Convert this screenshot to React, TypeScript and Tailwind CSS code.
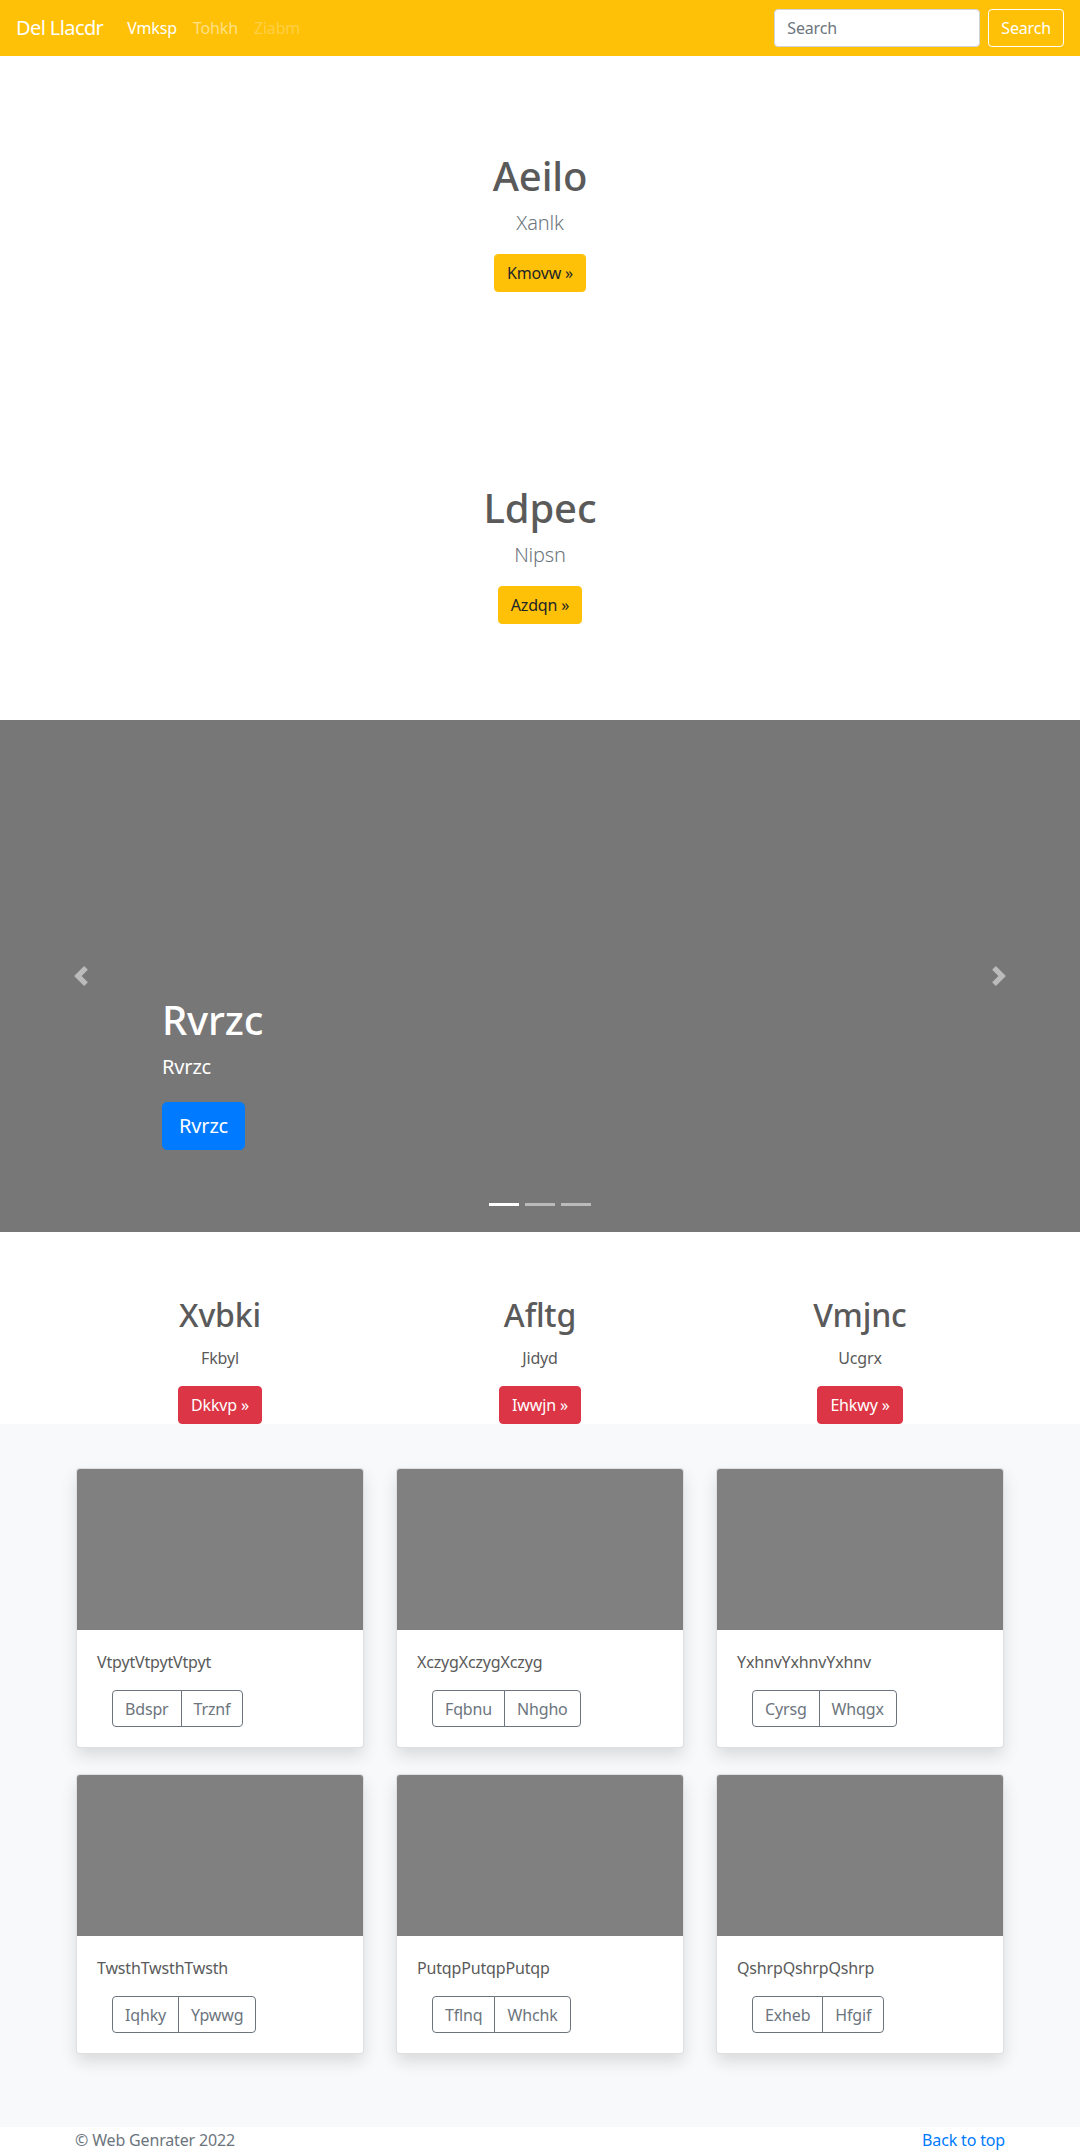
const features = [
  { title: "Xvbki", text: "Fkbyl", action: "Dkkvp »" },
  { title: "Afltg", text: "Jidyd", action: "Iwwjn »" },
  { title: "Vmjnc", text: "Ucgrx", action: "Ehkwy »" }
];

const cards = [
  { text: "VtpytVtpytVtpyt", buttons: ["Bdspr", "Trznf"] },
  { text: "XczygXczygXczyg", buttons: ["Fqbnu", "Nhgho"] },
  { text: "YxhnvYxhnvYxhnv", buttons: ["Cyrsg", "Whqgx"] },
  { text: "TwsthTwsthTwsth", buttons: ["Iqhky", "Ypwwg"] },
  { text: "PutqpPutqpPutqp", buttons: ["Tflnq", "Whchk"] },
  { text: "QshrpQshrpQshrp", buttons: ["Exheb", "Hfgif"] }
];

function Hero({ title, lead, action }: { title: string; lead: string; action: string }) {
  return (
    <section className="py-24 text-center">
      <h1 className="mb-2 text-[40px] leading-[48px] font-medium text-[#5a5a5a]">{title}</h1>
      <p className="mb-4 text-xl leading-[30px] font-light text-[#6c757d]">{lead}</p>
      <a className="inline-block h-[38px] rounded border border-[#ffc107] bg-[#ffc107] px-3 py-1.5 text-base leading-6 text-[#212529]">
        {action}
      </a>
    </section>
  );
}

function Carousel() {
  return (
    <div className="relative h-[512px] overflow-hidden bg-[#777777]">
      <div className="absolute inset-y-0 left-0 flex w-[15%] items-center justify-center opacity-50">
        <svg width="20" height="20" viewBox="0 0 8 8" fill="#fff">
          <path d="M5.25 0l-4 4 4 4 1.5-1.5L4.25 4l2.5-2.5L5.25 0z" />
        </svg>
      </div>
      <div className="absolute inset-y-0 right-0 flex w-[15%] items-center justify-center opacity-50">
        <svg width="20" height="20" viewBox="0 0 8 8" fill="#fff">
          <path d="M2.75 0l-1.5 1.5L3.75 4l-2.5 2.5L2.75 8l4-4-4-4z" />
        </svg>
      </div>

      <div className="absolute right-[15%] bottom-[46px] left-[15%] py-5 text-left text-white">
        <h1 className="mb-2 text-[40px] leading-[48px] font-medium">Rvrzc</h1>
        <p className="mb-5 text-xl leading-[30px]">Rvrzc</p>
        <p className="mb-4">
          <a className="inline-block h-12 rounded-[5px] border border-[#007bff] bg-[#007bff] px-4 py-2 text-xl leading-[30px] text-white">
            Rvrzc
          </a>
        </p>
      </div>

      <ol className="absolute inset-x-0 bottom-0 mb-4 flex justify-center">
        <li className="mx-[3px] my-[10px] h-[3px] w-[30px] bg-white" />
        <li className="mx-[3px] my-[10px] h-[3px] w-[30px] bg-white opacity-50" />
        <li className="mx-[3px] my-[10px] h-[3px] w-[30px] bg-white opacity-50" />
      </ol>
    </div>
  );
}

export default function App() {
  return (
    <div className="min-h-[2152px] bg-white font-['Segoe_UI','Noto_Sans',sans-serif] text-base leading-6 tracking-[-0.01em] text-[#5a5a5a]">
      <nav className="flex h-14 items-center bg-[#ffc107] px-4">
        <a className="mr-4 text-xl leading-[30px] tracking-[-0.03em] text-white">Del Llacdr</a>
        <ul className="flex">
          <li>
            <a className="px-2 text-white">Vmksp</a>
          </li>
          <li>
            <a className="px-2 text-white/50">Tohkh</a>
          </li>
          <li>
            <a className="px-2 text-white/25">Ziabm</a>
          </li>
        </ul>
        <form className="ml-auto flex items-center">
          <input
            placeholder="Search"
            className="mr-2 h-[38px] w-[206px] rounded border border-[#ced4da] bg-white px-3 text-base text-[#495057] outline-none placeholder:text-[#6c757d]"
          />
          <button type="button" className="h-[38px] rounded border border-white px-3 text-white">
            Search
          </button>
        </form>
      </nav>

      <Hero title="Aeilo" lead="Xanlk" action="Kmovw »" />
      <Hero title="Ldpec" lead="Nipsn" action="Azdqn »" />

      <Carousel />

      <div className="mx-auto mt-16 grid w-[960px] grid-cols-3 text-center">
        {features.map((f) => (
          <div key={f.title} className="px-[15px]">
            <h2 className="mb-3 text-[32px] leading-[38px] font-medium">{f.title}</h2>
            <p className="mb-4">{f.text}</p>
            <a className="inline-block h-[38px] rounded border border-[#dc3545] bg-[#dc3545] px-3 py-1.5 leading-6 text-white">
              {f.action}
            </a>
          </div>
        ))}
      </div>

      <div className="bg-[#f8f9fa] pt-[44px] pb-[73px]">
        <div className="mx-auto grid w-[960px] grid-cols-3 gap-y-[26px]">
          {cards.map((c) => (
            <div key={c.text} className="px-4">
              <div className="overflow-hidden rounded border border-black/[0.125] bg-white shadow-[0_8px_16px_rgba(0,0,0,0.12)]">
                <div className="h-[161px] bg-[#808080]" />
                <div className="p-5">
                  <p className="mb-4">{c.text}</p>
                  <div className="ml-[15px] inline-flex">
                    {c.buttons.map((b, i) => (
                      <button
                        key={b}
                        type="button"
                        className={
                          i === 0
                            ? "h-[37px] rounded-l border border-[#6c757d] px-3 text-[#6c757d]"
                            : "-ml-px h-[37px] rounded-r border border-[#6c757d] px-3 text-[#6c757d]"
                        }
                      >
                        {b}
                      </button>
                    ))}
                  </div>
                </div>
              </div>
            </div>
          ))}
        </div>
      </div>

      <footer className="mx-auto flex h-6 w-[930px] justify-between pt-[3px] leading-[21px] text-[#6c757d]">
        <p>© Web Genrater 2022</p>
        <a className="text-[#007bff]">Back to top</a>
      </footer>
    </div>
  );
}
